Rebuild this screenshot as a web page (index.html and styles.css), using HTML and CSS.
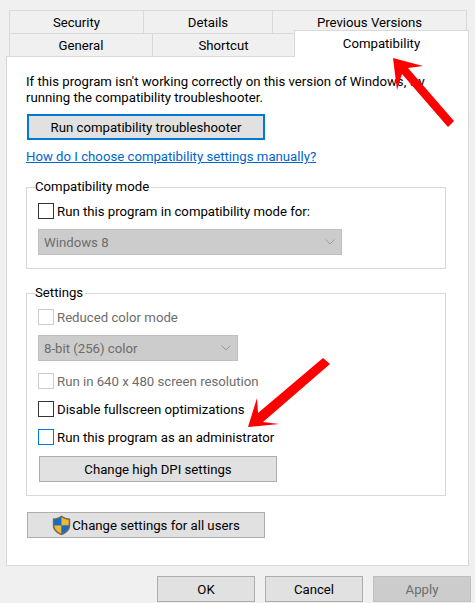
FILE: index.html
```html
<!DOCTYPE html>
<html lang="en">
<head>
    <meta charset="UTF-8">
    <meta name="viewport" content="width=device-width, initial-scale=1.0">
    <title>Properties - Compatibility</title>
    <link rel="stylesheet" href="styles.css">
</head>
<body>
    <div class="tabs">
        <div class="tab-row tab-row-back">
            <div class="tab tab-security">Security</div>
            <div class="tab tab-details">Details</div>
            <div class="tab tab-previous">Previous Versions</div>
        </div>
        <div class="tab-row">
            <div class="tab tab-general">General</div>
            <div class="tab tab-shortcut">Shortcut</div>
            <div class="tab tab-active">Compatibility</div>
        </div>
    </div>

    <div class="panel">
        <p class="intro">If this program isn't working correctly on this version of Windows, try<br>running the compatibility troubleshooter.</p>
        <button class="btn btn-focus">Run compatibility troubleshooter</button>
        <a class="help-link" href="#">How do I choose compatibility settings manually?</a>

        <fieldset class="group group-mode">
            <legend>Compatibility mode</legend>
            <label class="check"><span class="box"></span>Run this program in compatibility mode for:</label>
            <div class="select select-wide">Windows 8
                <svg class="chevron" width="10" height="6" viewBox="0 0 10 6"><path d="M.5.5 5 5 9.500.5" fill="none" stroke="#999"/></svg>
            </div>
        </fieldset>

        <fieldset class="group group-settings">
            <legend>Settings</legend>
            <label class="check check-off"><span class="box"></span>Reduced color mode</label>
            <div class="select select-narrow">8-bit (256) color
                <svg class="chevron" width="10" height="6" viewBox="0 0 10 6"><path d="M.5.5 5 5 9.500.5" fill="none" stroke="#999"/></svg>
            </div>
            <label class="check check-off check-res"><span class="box"></span>Run in 640 x 480 screen resolution</label>
            <label class="check check-full"><span class="box"></span>Disable fullscreen optimizations</label>
            <label class="check check-admin"><span class="box box-hover"></span>Run this program as an administrator</label>
            <button class="btn btn-dpi">Change high DPI settings</button>
        </fieldset>

        <button class="btn btn-users">
            <svg class="shield" width="19" height="21" viewBox="0 0 19 21">
                <path d="M9.500.5C7 2.500 4 3.500.8 3.500v7c0 4.500 3.500 7.800 8.700 9.800 5.200-2 8.700-5.300 8.700-9.800v-7C15 3.500 12 2.500 9.500.5z" fill="#6d6a5c"/>
                <path d="M9.500 2.300C7.500 3.800 5 4.700 2.300 4.900V10.500h7.200z" fill="#0f6fc6"/>
                <path d="M9.500 2.300c2 1.500 4.500 2.400 7.200 2.600v5.600H9.500z" fill="#f5b731"/>
                <path d="M2.300 10.500h7.200v8.200c-4.100-1.700-7-4.500-7.200-8.200z" fill="#f5b731"/>
                <path d="M16.700 10.500H9.500v8.200c4.100-1.700 7-4.500 7.200-8.200z" fill="#0f6fc6"/>
            </svg>
            Change settings for all users
        </button>
    </div>

    <div class="footer">
        <button class="btn">OK</button>
        <button class="btn">Cancel</button>
        <button class="btn btn-disabled">Apply</button>
    </div>

    <svg class="arrows" width="475" height="603" viewBox="0 0 475 603">
        <polygon points="393,58 423,66 408,68 454,121 448,127 402,74 397,90" fill="#fe0000"/>
        <polygon points="323,358 330,364 263,422 279,424 248,427 257,398 258,413" fill="#fe0000"/>
    </svg>
</body>
</html>
```

FILE: styles.css
```css
body {
    margin: 0;
    width: 475px;
    height: 603px;
    overflow: hidden;
    position: relative;
    background-color: #f0f0f0;
    font-family: Roboto, sans-serif;
    font-size: 13.2px;
    color: #000;
}

/* tabs */
.tabs {
    height: 46px;
    padding: 10px 0 0 9px;
}

.tab-row {
    display: flex;
    height: 23px;
}

.tab {
    box-sizing: border-box;
    height: 23px;
    line-height: 24px;
    text-align: center;
    background-color: #f0f0f0;
    border: 1px solid #d9d9d9;
    border-bottom: none;
    margin-right: -1px;
}

.tab-security { width: 135px; }
.tab-details { width: 130px; }
.tab-previous { width: 195px; }
.tab-general { width: 144px; }
.tab-shortcut { width: 143px; }

.tab-active {
    width: 175px;
    height: 27px;
    margin-top: -3px;
    margin-right: 0;
    line-height: 26px;
    background-color: #fff;
    position: relative;
    z-index: 1;
}

/* main panel */
.panel {
    box-sizing: border-box;
    width: 463px;
    height: 510px;
    margin-left: 6px;
    padding: 17px 0 0 19px;
    background-color: #fff;
    border: 1px solid #d9d9d9;
}

.intro {
    margin: 0;
    line-height: 16px;
}

.btn {
    box-sizing: border-box;
    display: block;
    width: 238px;
    height: 26px;
    padding: 0;
    font-family: inherit;
    font-size: inherit;
    color: #000;
    background-color: #e1e1e1;
    border: 1px solid #adadad;
}

.btn-focus {
    margin-top: 8px;
    margin-left: 1px;
    border: 2px solid #0078d7;
}

.help-link {
    display: block;
    margin-top: 9px;
    line-height: 16px;
    color: #0066cc;
}

/* group boxes */
.group {
    box-sizing: border-box;
    width: 420px;
    margin: 0;
    padding: 0 0 0 11px;
    border: 1px solid #d9d9d9;
}

.group legend {
    margin-left: -3px;
    padding: 0 2px 0 0;
    line-height: 16px;
}

.group-mode {
    height: 90px;
    margin-top: 14px;
}

.group-settings {
    height: 211px;
    margin-top: 16px;
}

.check {
    display: flex;
    align-items: center;
    gap: 3px;
    height: 16px;
    margin-top: 8px;
}

.box {
    box-sizing: border-box;
    width: 16px;
    height: 16px;
    background-color: #fff;
    border: 1px solid #333;
}

.check-off {
    color: #6d6d6d;
}

.check-off .box {
    border-color: #ccc;
}

.check-res,
.check-full,
.check-admin {
    margin-top: 12px;
}

.box-hover {
    border-color: #0078d7;
}

.select {
    box-sizing: border-box;
    display: flex;
    align-items: center;
    justify-content: space-between;
    height: 26px;
    margin-top: 10px;
    padding: 0 6px 0 5px;
    color: #6d6d6d;
    background-color: #cccccc;
    border: 1px solid #bfbfbf;
}

.select-wide { width: 304px; }
.select-narrow { width: 200px; }

.btn-dpi {
    margin-top: 11px;
    margin-left: 1px;
}

.btn-users {
    display: flex;
    align-items: center;
    justify-content: center;
    gap: 1px;
    margin-top: 16px;
    margin-left: 1px;
}

/* bottom buttons */
.footer {
    display: flex;
    gap: 10px;
    margin-top: 10px;
    margin-left: 157px;
}

.footer .btn {
    width: 98px;
}

.btn-disabled {
    color: #6d6d6d;
    background-color: #cccccc;
    border-color: #bfbfbf;
}

/* annotation arrows drawn over the dialog */
.arrows {
    position: absolute;
    top: 0;
    left: 0;
    z-index: 2;
}
```
